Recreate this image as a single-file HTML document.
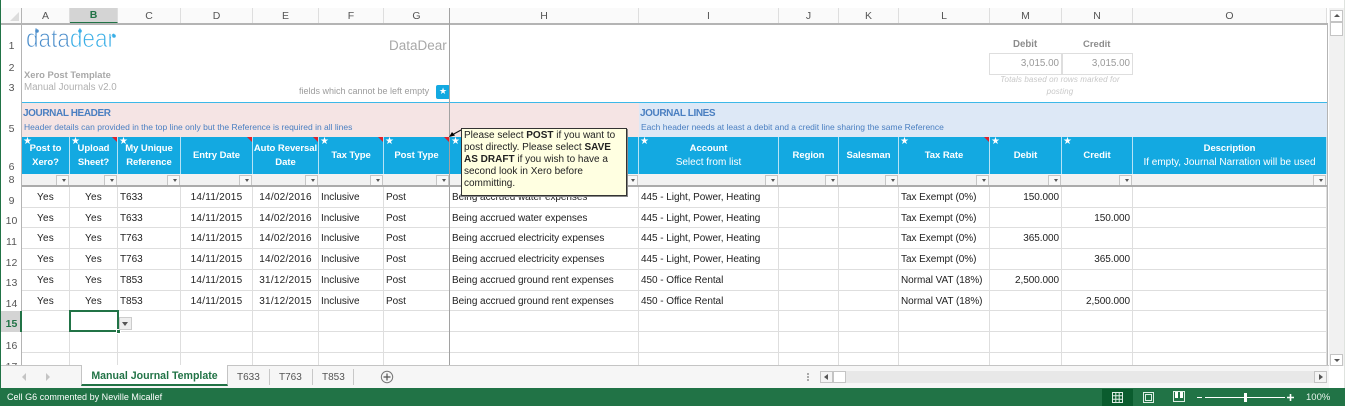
<!DOCTYPE html>
<html><head><meta charset="utf-8"><title>Manual Journal Template</title>
<style>
html,body{margin:0;padding:0;width:1345px;height:406px;overflow:hidden;background:#fff}
*{box-sizing:border-box}
body{position:relative;font-family:"Liberation Sans",sans-serif;font-size:10px;color:#222}
.a{position:absolute;white-space:nowrap}
table{border-collapse:separate;border-spacing:0;table-layout:fixed;position:absolute;left:0;top:0;width:1305px}
td{padding:0;overflow:hidden;white-space:nowrap;vertical-align:middle}
#ch{position:absolute;left:22px;top:8px;width:1305px;height:15px}
#ch td{height:15px;text-align:center;font-size:10.5px;color:#555;border-right:1px solid #dedede;background:#fafafa}
#ch td.s{background:#d4d4d4;color:#217346;font-weight:bold;border-bottom:1px solid #217346}
#g{position:absolute;left:22px;top:137px;width:1305px;height:229px;overflow:hidden}
#g .h td{height:37px;background:#13a9e1;color:#fff;font-weight:bold;text-align:center;border-right:1px solid #b5e3f6;line-height:14px;position:relative;font-size:9.5px;letter-spacing:-.05px}
#g .h i{font-style:normal;font-weight:normal;font-size:10px;letter-spacing:0}
#g .h b.st{position:absolute;left:1px;top:-1px;font:10px/12px "DejaVu Sans",sans-serif;color:#fff}
#g .h td.t::after{content:"";position:absolute;right:0;top:0;border-top:5px solid #e0202a;border-left:5px solid transparent}
#g .f td{height:13px;background:#f2f2f2;border-bottom:2px solid #ababab;position:relative}
#g .f td::before{content:"";position:absolute;right:1px;top:1px;width:11px;height:10px;background:#f8f8f8;border:1px solid #c6c6c6}
#g .f td::after{content:"";position:absolute;right:4px;top:5px;border-top:3px solid #555;border-left:2.5px solid transparent;border-right:2.5px solid transparent}
#g .d td{border-right:1px solid #dedede;border-bottom:1px solid #dedede;padding:1px 2px 0;font-size:10px;letter-spacing:-.05px}
#g .d td.c{text-align:center;letter-spacing:.25px}
#g .d td.r{text-align:right;padding-right:2px}
.rn{position:absolute;left:2px;width:19px;text-align:center;font-size:10.5px;color:#555;line-height:12px}
.band{position:absolute;top:103px;height:34px}
.bt{font-weight:bold;font-size:10px;letter-spacing:-.4px;color:#4a7fc1}
.bs{font-size:8.5px;color:#4a7fc1}
.tab{position:absolute;top:371px;font-size:10px;color:#555}
.sep{position:absolute;top:369px;width:1px;height:16px;background:#c8c8c8}
.btn{position:absolute;background:#fff;border:1px solid #c4c4c4}
</style></head>
<body>
<!-- left window edge -->
<div class="a" style="left:0;top:0;width:1px;height:406px;background:#217346"></div>
<div class="a" style="left:1344px;top:0;width:1px;height:388px;background:#dfe3df"></div>

<!-- column headers -->
<div class="a" style="left:1px;top:8px;width:21px;height:15px;background:#fafafa"></div>
<div class="a" style="left:10px;top:12px;border-bottom:9px solid #dcdcdc;border-left:9px solid transparent"></div>
<div id="ch"><table><colgroup><col style="width:48px"><col style="width:48px"><col style="width:63px"><col style="width:72px"><col style="width:66px"><col style="width:65px"><col style="width:66px"><col style="width:189px"><col style="width:140px"><col style="width:60px"><col style="width:60px"><col style="width:91px"><col style="width:72px"><col style="width:71px"><col style="width:194px"></colgroup>
<tr><td>A</td><td class="s">B</td><td>C</td><td>D</td><td>E</td><td>F</td><td>G</td><td>H</td><td>I</td><td>J</td><td>K</td><td>L</td><td>M</td><td>N</td><td>O</td></tr></table></div>
<div class="a" style="left:1px;top:23px;width:1327px;height:2px;background:#b4b4b4"></div>
<div class="a" style="left:21px;top:8px;width:1px;height:358px;background:#b4b4b4"></div>

<!-- row numbers -->
<div class="rn" style="top:40px">1</div>
<div class="rn" style="top:62px">2</div>
<div class="rn" style="top:82px">3</div>
<div class="rn" style="top:123px">5</div>
<div class="rn" style="top:161px">6</div>
<div class="rn" style="top:174px">8</div>
<div class="rn" style="top:195px">9</div>
<div class="rn" style="top:215px">10</div>
<div class="rn" style="top:236px">11</div>
<div class="rn" style="top:257px">12</div>
<div class="rn" style="top:277px">13</div>
<div class="rn" style="top:298px">14</div>
<div class="a" style="left:1px;top:311px;width:20px;height:21px;background:#d4d4d4"></div>
<div class="rn" style="top:318px;color:#217346;font-weight:bold">15</div>
<div class="a" style="left:20px;top:311px;width:2px;height:21px;background:#217346"></div>
<div class="rn" style="top:340px">16</div>
<div class="rn" style="top:361px;height:5px;overflow:hidden">17</div>

<!-- logo -->
<svg class="a" style="left:24px;top:26px" width="96" height="26" viewBox="0 0 96 26">
<text x="2" y="21" font-family="Liberation Sans" font-size="26" textLength="89" lengthAdjust="spacingAndGlyphs" stroke="#fff" stroke-width=".85"><tspan fill="#4c8ecb">data</tspan><tspan fill="#39aee6">dear</tspan></text>
<circle cx="13" cy="5" r="1.8" fill="#4c8ecb"/><circle cx="56" cy="5" r="1.8" fill="#39aee6"/><circle cx="90" cy="10" r="1.8" fill="#39aee6"/>
</svg>

<!-- top area text -->
<div class="a" style="left:389px;top:37px;font-size:13.5px;line-height:17px;color:#a8a8a8">DataDear</div>
<div class="a" style="left:24px;top:69px;font-size:9.4px;line-height:12px;font-weight:bold;color:#a8a8a8">Xero Post Template</div>
<div class="a" style="left:24px;top:82px;font-size:9.75px;line-height:12px;color:#b0b0b0">Manual Journals v2.0</div>
<div class="a" style="left:299px;top:85px;font-size:9px;line-height:12px;color:#9c9c9c">fields which cannot be left empty</div>
<div class="a" style="left:436px;top:85px;width:14px;height:14px;background:#13a9e1;border-radius:2px;color:#fff;font:9px/14px 'DejaVu Sans',sans-serif;text-align:center">★</div>

<div class="a" style="left:1013px;top:39px;font-size:9.7px;line-height:12px;font-weight:bold;color:#8c8c8c">Debit</div>
<div class="a" style="left:1083px;top:39px;font-size:9.5px;line-height:12px;font-weight:bold;color:#8c8c8c">Credit</div>
<div class="a" style="left:989px;top:53px;width:73px;height:22px;border:1px solid #dedede;text-align:right;padding-right:2px;font-size:9.8px;line-height:20px;color:#9a9a9a">3,015.00</div>
<div class="a" style="left:1062px;top:53px;width:71px;height:22px;border:1px solid #dedede;text-align:right;padding-right:2px;font-size:9.8px;line-height:20px;color:#9a9a9a">3,015.00</div>
<div class="a" style="left:990px;top:74px;width:140px;text-align:center;font-size:8px;line-height:12px;font-style:italic;color:#c8c8c8;letter-spacing:.12px;white-space:normal">Totals based on rows marked for<br>posting</div>

<!-- bands -->
<div class="a" style="left:22px;top:102px;width:1305px;height:1px;background:#3cb8e8"></div>
<div class="band" style="left:22px;width:617px;background:#f5e4e4"></div>
<div class="band" style="left:639px;width:688px;background:#dde8f6"></div>
<div class="a bt" style="left:23px;top:107px;line-height:13px">JOURNAL HEADER</div>
<div class="a bs" style="left:24px;top:122px;line-height:11px">Header details can provided in the top line only but the Reference is required in all lines</div>
<div class="a bt" style="left:640px;top:107px;line-height:13px">JOURNAL LINES</div>
<div class="a bs" style="left:641px;top:122px;line-height:11px">Each header needs at least a debit and a credit line sharing the same Reference</div>

<!-- grid -->
<div id="g"><table><colgroup><col style="width:48px"><col style="width:48px"><col style="width:63px"><col style="width:72px"><col style="width:66px"><col style="width:65px"><col style="width:66px"><col style="width:189px"><col style="width:140px"><col style="width:60px"><col style="width:60px"><col style="width:91px"><col style="width:72px"><col style="width:71px"><col style="width:194px"></colgroup>
<tr class="h"><td><b class="st">★</b>Post to<br>Xero?</td><td class="t"><b class="st">★</b>Upload<br>Sheet?</td><td><b class="st">★</b>My Unique<br>Reference</td><td class="t">Entry Date</td><td class="t">Auto Reversal<br>Date</td><td class="t"><b class="st">★</b>Tax Type</td><td class="t"><b class="st">★</b>Post Type</td><td><b class="st">★</b></td><td><b class="st">★</b>Account<br><i>Select from list</i></td><td>Region</td><td>Salesman</td><td class="t"><b class="st">★</b>Tax Rate</td><td><b class="st">★</b>Debit</td><td><b class="st">★</b>Credit</td><td>Description<br><i>If empty, Journal Narration will be used</i></td></tr>
<tr class="f"><td></td><td></td><td></td><td></td><td></td><td></td><td></td><td></td><td></td><td></td><td></td><td></td><td></td><td></td><td></td></tr>
<tr class="d" style="height:21px"><td class="c">Yes</td><td class="c">Yes</td><td>T633</td><td class="c">14/11/2015</td><td class="c">14/02/2016</td><td>Inclusive</td><td>Post</td><td>Being accrued water expenses</td><td>445 - Light, Power, Heating</td><td></td><td></td><td>Tax Exempt (0%)</td><td class="r">150.000</td><td class="r"></td><td></td></tr>
<tr class="d" style="height:20px"><td class="c">Yes</td><td class="c">Yes</td><td>T633</td><td class="c">14/11/2015</td><td class="c">14/02/2016</td><td>Inclusive</td><td>Post</td><td>Being accrued water expenses</td><td>445 - Light, Power, Heating</td><td></td><td></td><td>Tax Exempt (0%)</td><td class="r"></td><td class="r">150.000</td><td></td></tr>
<tr class="d" style="height:21px"><td class="c">Yes</td><td class="c">Yes</td><td>T763</td><td class="c">14/11/2015</td><td class="c">14/02/2016</td><td>Inclusive</td><td>Post</td><td>Being accrued electricity expenses</td><td>445 - Light, Power, Heating</td><td></td><td></td><td>Tax Exempt (0%)</td><td class="r">365.000</td><td class="r"></td><td></td></tr>
<tr class="d" style="height:21px"><td class="c">Yes</td><td class="c">Yes</td><td>T763</td><td class="c">14/11/2015</td><td class="c">14/02/2016</td><td>Inclusive</td><td>Post</td><td>Being accrued electricity expenses</td><td>445 - Light, Power, Heating</td><td></td><td></td><td>Tax Exempt (0%)</td><td class="r"></td><td class="r">365.000</td><td></td></tr>
<tr class="d" style="height:21px"><td class="c">Yes</td><td class="c">Yes</td><td>T853</td><td class="c">14/11/2015</td><td class="c">31/12/2015</td><td>Inclusive</td><td>Post</td><td>Being accrued ground rent expenses</td><td>450 - Office Rental</td><td></td><td></td><td>Normal VAT (18%)</td><td class="r">2,500.000</td><td class="r"></td><td></td></tr>
<tr class="d" style="height:20px"><td class="c">Yes</td><td class="c">Yes</td><td>T853</td><td class="c">14/11/2015</td><td class="c">31/12/2015</td><td>Inclusive</td><td>Post</td><td>Being accrued ground rent expenses</td><td>450 - Office Rental</td><td></td><td></td><td>Normal VAT (18%)</td><td class="r"></td><td class="r">2,500.000</td><td></td></tr>
<tr class="d" style="height:21px"><td></td><td></td><td></td><td></td><td></td><td></td><td></td><td></td><td></td><td></td><td></td><td></td><td></td><td></td><td></td></tr>
<tr class="d" style="height:21px"><td></td><td></td><td></td><td></td><td></td><td></td><td></td><td></td><td></td><td></td><td></td><td></td><td></td><td></td><td></td></tr>
<tr class="d" style="height:21px"><td></td><td></td><td></td><td></td><td></td><td></td><td></td><td></td><td></td><td></td><td></td><td></td><td></td><td></td><td></td></tr>
</table></div>

<!-- freeze line and right edge -->
<div class="a" style="left:449px;top:8px;width:1px;height:358px;background:#a2a2a2"></div>
<div class="a" style="left:1327px;top:23px;width:1px;height:343px;background:#b4b4b4"></div>

<!-- selected cell -->
<div class="a" style="left:69px;top:310px;width:50px;height:22px;border:2px solid #217346"></div>
<div class="a" style="left:116px;top:329px;width:5px;height:5px;background:#217346;border:1px solid #fff"></div>
<div class="a" style="left:119px;top:317px;width:13px;height:13px;background:#eee;border:1px solid #ccc"></div>
<div class="a" style="left:122px;top:322px;border-top:4px solid #555;border-left:3.5px solid transparent;border-right:3.5px solid transparent"></div>

<!-- comment -->
<svg class="a" style="left:446px;top:126px" width="20" height="14" viewBox="0 0 20 14"><path d="M16 3.5L5 9.5" stroke="#111" stroke-width="1" fill="none"/><path d="M3 11L9 9.5L6 6Z" fill="#000"/></svg>
<div class="a" style="left:461px;top:128px;width:166px;height:68px;background:#ffffe1;border:1px solid #333;box-shadow:1px 1px 0 #888;padding:1px 2px;font-size:10px;line-height:12px;color:#222;white-space:normal;overflow:hidden">Please select <b>POST</b> if you want to<br>post directly. Please select <b>SAVE<br>AS DRAFT</b> if you wish to have a<br>second look in Xero before<br>committing.</div>

<!-- vertical scrollbar -->
<div class="a" style="left:1329px;top:8px;width:15px;height:358px;background:#f1f1f1"></div>
<div class="btn" style="left:1330px;top:10px;width:13px;height:12px"></div>
<div class="a" style="left:1334px;top:14px;border-bottom:3px solid #555;border-left:3px solid transparent;border-right:3px solid transparent"></div>
<div class="btn" style="left:1330px;top:22px;width:13px;height:14px"></div>
<div class="btn" style="left:1330px;top:354px;width:13px;height:12px"></div>
<div class="a" style="left:1334px;top:359px;border-top:3px solid #555;border-left:3px solid transparent;border-right:3px solid transparent"></div>

<!-- tab bar -->
<div class="a" style="left:1px;top:365px;width:1328px;height:23px;background:#f6f6f6;border-top:1px solid #c4c4c4"></div>
<div class="a" style="left:22px;top:373px;border-right:4px solid #c4c4c4;border-top:4px solid transparent;border-bottom:4px solid transparent"></div>
<div class="a" style="left:46px;top:373px;border-left:4px solid #c4c4c4;border-top:4px solid transparent;border-bottom:4px solid transparent"></div>
<div class="a" style="left:81px;top:365px;width:147px;height:21px;background:#fff;border-left:1px solid #c4c4c4;border-right:1px solid #c4c4c4;border-bottom:2px solid #217346;font-size:10.6px;font-weight:bold;color:#217346;line-height:22px;text-align:center">Manual Journal Template</div>
<div class="tab" style="left:237px;line-height:13px">T633</div>
<div class="sep" style="left:269px"></div>
<div class="tab" style="left:279px;line-height:13px">T763</div>
<div class="sep" style="left:312px"></div>
<div class="tab" style="left:322px;line-height:13px">T853</div>
<div class="sep" style="left:353px"></div>
<svg class="a" style="left:380px;top:370px" width="14" height="14" viewBox="0 0 14 14"><circle cx="7" cy="7" r="5.7" fill="none" stroke="#777" stroke-width="1"/><path d="M3.5 7H10.5M7 3.5V10.5" stroke="#555" stroke-width="1.2"/></svg>

<!-- horizontal scrollbar -->
<div class="a" style="left:807px;top:373px;width:2px;height:2px;background:#aaa"></div>
<div class="a" style="left:807px;top:376px;width:2px;height:2px;background:#aaa"></div>
<div class="a" style="left:807px;top:379px;width:2px;height:2px;background:#aaa"></div>
<div class="a" style="left:820px;top:371px;width:507px;height:12px;background:#e8e8e8"></div>
<div class="btn" style="left:820px;top:371px;width:13px;height:12px;background:#f4f4f4"></div>
<div class="a" style="left:824px;top:374px;border-right:4px solid #555;border-top:3px solid transparent;border-bottom:3px solid transparent"></div>
<div class="btn" style="left:833px;top:371px;width:13px;height:12px"></div>
<div class="btn" style="left:1314px;top:371px;width:13px;height:12px;background:#f4f4f4"></div>
<div class="a" style="left:1319px;top:374px;border-left:4px solid #555;border-top:3px solid transparent;border-bottom:3px solid transparent"></div>

<!-- status bar -->
<div class="a" style="left:0;top:388px;width:1345px;height:18px;background:#217346"></div>
<div class="a" style="left:7px;top:391px;font-size:9px;line-height:12px;color:#fff;letter-spacing:.03px">Cell G6 commented by Neville Micallef</div>
<div class="a" style="left:1102px;top:389px;width:31px;height:17px;background:#0a5c2e"></div>
<svg class="a" style="left:1102px;top:388px" width="240" height="18" viewBox="0 0 240 18">
<g fill="none" stroke="#dfeee5" stroke-width="1">
<rect x="10.5" y="4.5" width="10" height="10"/><path d="M13.8 4.5V14.5M17.2 4.5V14.5M10.5 7.8H20.5M10.5 11.2H20.5"/>
<rect x="41.5" y="4.5" width="10" height="10"/><rect x="43.5" y="6.5" width="6" height="6"/>
<rect x="71.5" y="3.5" width="11" height="10"/>
</g>
<path d="M73 4H76V10H73ZM78 4H81V10H78Z" fill="#fff"/>
<path d="M95 9.5H100M103 9.5H183" stroke="#fff" stroke-width="1"/>
<rect x="142" y="5" width="3" height="9" fill="#fff"/>
<path d="M185 9.5H192M188.500 6V13" stroke="#fff" stroke-width="1.6"/>
</svg>
<div class="a" style="left:1306px;top:392px;font-size:9.5px;line-height:12px;color:#e8f3ec">100%</div>
</body></html>
